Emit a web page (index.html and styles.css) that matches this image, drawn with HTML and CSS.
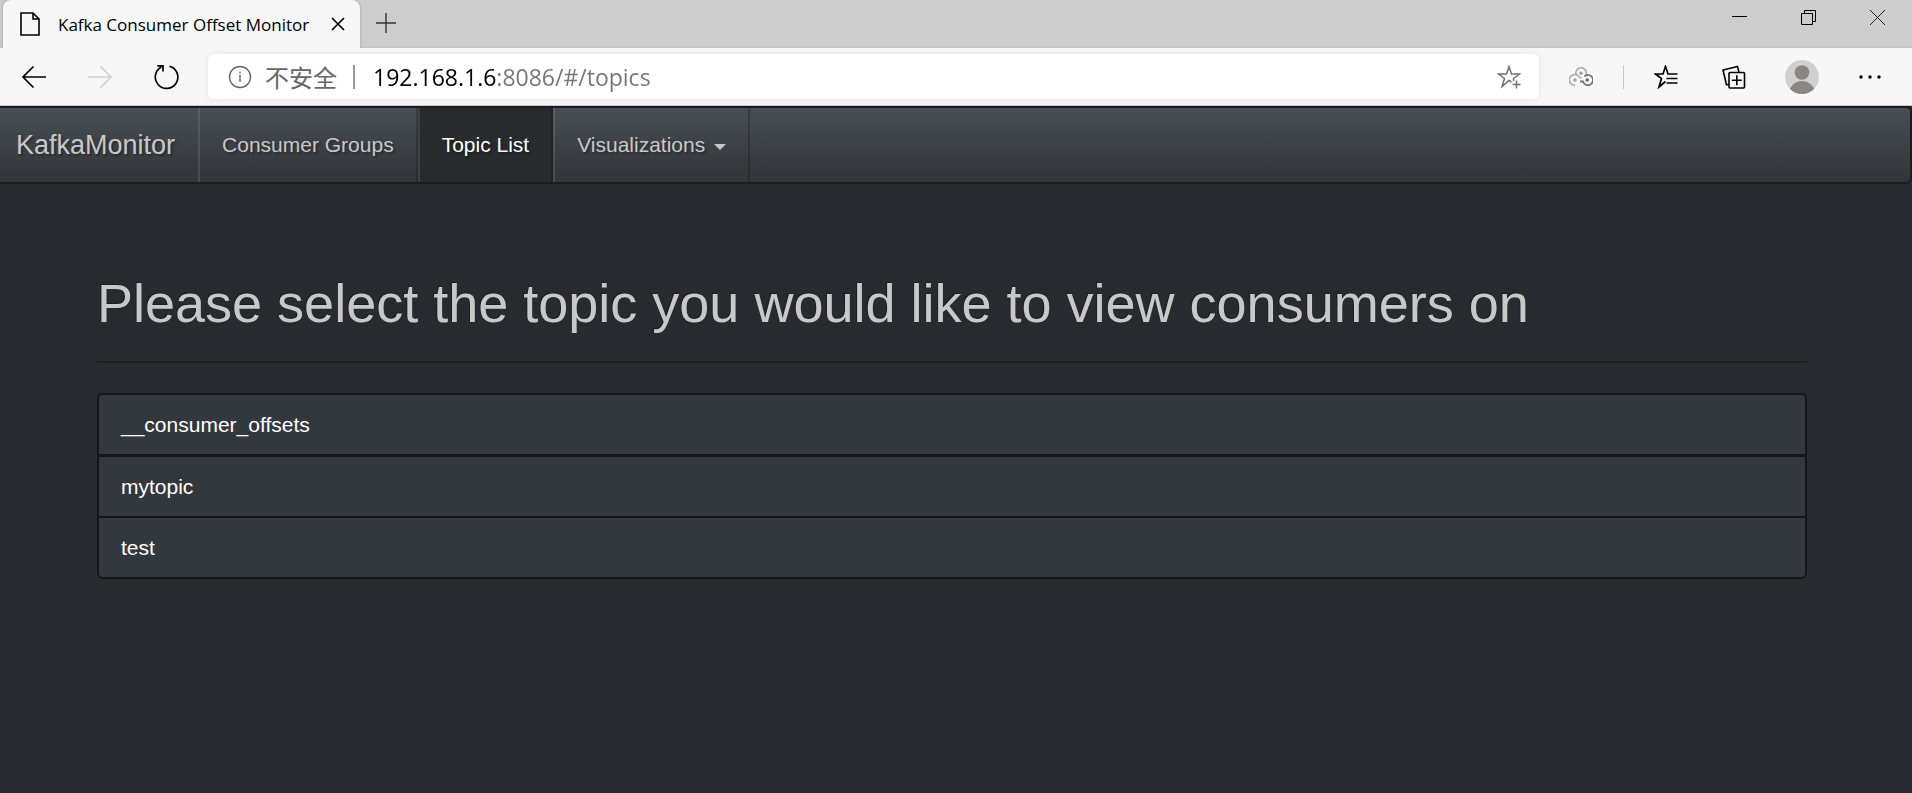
FILE: index.html
```html
<!DOCTYPE html>
<html lang="en">
<head>
<meta charset="utf-8">
<title>Kafka Consumer Offset Monitor</title>
<link rel="stylesheet" href="styles.css">
</head>
<body>
<div class="browser">
  <div class="tab-strip">
    <div class="tab">
      <svg class="tab-icon" width="20" height="24" viewBox="0 0 20 24" fill="none" stroke="#000" stroke-width="1.6"><path d="M1 1h12l6 6v16H1zM13 1v6h6"/></svg>
      <span class="tab-title">Kafka Consumer Offset Monitor</span>
      <button class="tab-close" type="button" aria-label="Close tab">
        <svg width="14" height="14" viewBox="0 0 14 14" stroke="#000" stroke-width="1.7"><path d="M1 1l12 12M13 1L1 13"/></svg>
      </button>
    </div>
    <button class="new-tab" type="button" aria-label="New tab">
      <svg width="20" height="20" viewBox="0 0 20 20" stroke="#333" stroke-width="1.4"><path d="M10 0v20M0 10h20"/></svg>
    </button>
    <div class="window-controls">
      <button type="button" aria-label="Minimize"><svg width="15" height="15" viewBox="0 0 15 15" stroke="#000"><path d="M0 6.5h15"/></svg></button>
      <button type="button" aria-label="Restore"><svg width="15" height="15" viewBox="0 0 15 15" fill="none" stroke="#000"><path d="M.5 3.5h11v11H.5zM3.500 3.500v-3h11v11h-3"/></svg></button>
      <button type="button" aria-label="Close"><svg width="15" height="15" viewBox="0 0 15 15" stroke="#222"><path d="M0 0l15 15M15 0L0 15"/></svg></button>
    </div>
  </div>
  <div class="toolbar">
    <button class="tool" type="button" aria-label="Back"><svg width="24" height="22" viewBox="0 0 24 22" fill="none" stroke="#000" stroke-width="1.6"><path d="M24 11H1M11.500 .5L1 11l10.500 10.500"/></svg></button>
    <button class="tool" type="button" aria-label="Forward" disabled><svg width="24" height="22" viewBox="0 0 24 22" fill="none" stroke="#cfcfcf" stroke-width="1.6"><path d="M0 11h23M12.500 .5L23 11 12.500 21.500"/></svg></button>
    <button class="tool" type="button" aria-label="Refresh"><svg width="26" height="26" viewBox="0 0 26 26" fill="none" stroke="#000" stroke-width="1.700"><path d="M16.500 2.200A11.300 11.300 0 1 1 8.500 3M4.300 1.800h5.700v5.700"/></svg></button>
    <form class="address">
      <button class="site-info" type="button">
        <svg width="24" height="24" viewBox="0 0 24 24" fill="none" stroke="#666" stroke-width="1.400"><circle cx="12" cy="12" r="10.500"/><path d="M12 10v7M12 6.500v1.800"/></svg>
        <span lang="zh">不安全</span>
      </button>
      <input class="url" type="text" aria-label="Address" value="192.168.1.6:8086/#/topics">
      <button class="add-favorite" type="button" aria-label="Add to favorites"><svg width="24" height="24" viewBox="0 0 24 24" fill="none" stroke="#707070" stroke-width="1.500"><path d="M14.500 17L12 15.500 5 21.500 7.500 13.500 1.500 9H9.500L12 1.500 14.500 9H22.500L16.500 13.500V16M19.500 15.500v8M15.500 19.500h8"/></svg></button>
    </form>
    <button class="tool wide" type="button" aria-label="Extension">
      <svg width="24" height="20" viewBox="0 0 24 20" fill="none" stroke-width="1.800"><path stroke="#b0b0b0" d="M6 18.300A5.400 5.400 0 1 1 9.500 9M7.500 8.500A5.200 5.200 0 1 1 16 9.500M9.500 9.500a5 5 0 0 0 3 1.500"/><path stroke="#777" d="M15.500 9.300A5.100 5.100 0 1 1 14 14.500h-3"/><g fill="#a0a0a0"><circle cx="6" cy="13" r="1.700"/><circle cx="12" cy="6.200" r="1.700"/><circle cx="18.200" cy="13" r="1.700" fill="#666"/></g></svg>
    </button>
    <span class="tool-divider"></span>
    <button class="tool wide" type="button" aria-label="Favorites"><svg width="24" height="24" viewBox="0 0 24 24" fill="none" stroke="#000" stroke-width="1.700"><path d="M11.500 16.500L5 22l2.500-8.500L1.500 9H9l2.500-7.500L14 9h9.500M12.500 13.500h11M12.500 18h11"/></svg></button>
    <button class="tool wide" type="button" aria-label="Collections"><svg width="24" height="24" viewBox="0 0 24 24" fill="none" stroke="#000" stroke-width="1.600"><rect x="7" y="7.500" width="15.500" height="15.500" rx="1"/><path d="M14.800 10.200v10M9.800 15.200h10M7 19.300l-2.500.5L1 5 15.500 1.500 17 7.500"/></svg></button>
    <button class="tool wide" type="button" aria-label="Profile"><svg width="34" height="34" viewBox="0 0 34 34"><circle cx="17" cy="17" r="17" fill="#d2d0ce"/><circle cx="17" cy="12.500" r="7.300" fill="#8a8684"/><path d="M5 29c2-5 7-8 12-8s10 3 12 8a17 17 0 0 1-24 0z" fill="#8a8684"/></svg></button>
    <button class="tool wide" type="button" aria-label="Settings and more"><svg width="22" height="4" viewBox="0 0 22 4"><circle cx="2" cy="2" r="1.700"/><circle cx="11" cy="2" r="1.700"/><circle cx="20" cy="2" r="1.700"/></svg></button>
  </div>
</div>
<nav class="navbar">
  <a class="brand" href="#/">KafkaMonitor</a>
  <a class="nav-link" href="#/groups">Consumer Groups</a>
  <a class="nav-link active" href="#/topics">Topic List</a>
  <a class="nav-link dropdown" href="#/visualizations">Visualizations<span class="caret"></span></a>
</nav>
<main class="content">
  <h1>Please select the topic you would like to view consumers on</h1>
  <div class="topics">
    <a class="topic" href="#/topics/__consumer_offsets">__consumer_offsets</a>
    <a class="topic" href="#/topics/mytopic">mytopic</a>
    <a class="topic" href="#/topics/test">test</a>
  </div>
</main>
</body>
</html>
```
FILE: styles.css
```css
* {
  box-sizing: border-box;
}

body {
  margin: 0;
  background: #272b30;
  color: #c8c8c8;
  font: 21px/29px "Liberation Sans", Arial, sans-serif;
}

button {
  display: flex;
  align-items: center;
  justify-content: center;
  padding: 0;
  border: 0;
  background: none;
  color: inherit;
  font: inherit;
}

a {
  color: inherit;
  text-decoration: none;
}

/* Browser frame */

.browser {
  color: #000;
  font-family: "Open Sans", "Noto Sans CJK SC", sans-serif;
}

.tab-strip {
  display: flex;
  height: 48px;
  padding-left: 3px;
  background: linear-gradient(#cdcdcd 46px, #bebebe 48px);
}

.tab {
  display: flex;
  align-items: center;
  width: 357px;
  padding: 0 15px 0 17px;
  border-radius: 8px 8px 0 0;
  background: #f7f7f7;
  box-shadow: 0 0 3px #999;
  clip-path: inset(0 -4px);
}

.tab-title {
  flex: 1;
  margin-left: 18px;
  font-size: 17px;
  white-space: nowrap;
}

.new-tab {
  width: 52px;
  height: 46px;
}

.window-controls {
  display: flex;
  height: 35px;
  margin-left: auto;
}

.window-controls button {
  width: 69px;
}

.toolbar {
  display: flex;
  align-items: center;
  height: 58px;
  padding: 0 8px 0 1px;
  border-bottom: 1px solid #c4c8c8;
  background: #f7f7f7;
}

.tool {
  flex: none;
  width: 66px;
  height: 45px;
}

.tool.wide {
  width: 68px;
}

.address {
  display: flex;
  flex: 1;
  align-items: center;
  height: 45px;
  margin: 0 8px 0 9px;
  padding: 0 18px 0 20px;
  border-radius: 6px;
  background: #fff;
  box-shadow: 0 0 6px #e4e4e4;
}

.site-info {
  gap: 13px;
  padding-right: 16px;
  border-right: 2px solid #999;
  color: #666;
  font: 24px/24px "Noto Sans CJK SC", sans-serif;
}

/* The host is black and the rest of the URL grey */
.url {
  flex: 1;
  min-width: 0;
  margin-left: 18px;
  padding: 0;
  border: 0;
  outline: 0;
  background: linear-gradient(90deg, #000 123px, #757575 123px);
  background-clip: text;
  color: transparent;
  font: 23px/32px "Open Sans", sans-serif;
}

.tool-divider {
  width: 1px;
  height: 24px;
  margin: 0 8px;
  background: #c8c8c8;
}

/* Application navigation */

.navbar {
  display: flex;
  height: 78px;
  border: 2px solid #1a1c1e;
  border-left: 0;
  border-radius: 0 6px 6px 0;
  background: linear-gradient(#484e55, #3a3f44 60%, #313539);
  line-height: 74px;
  text-shadow: 2px 2px 2px rgba(0, 0, 0, 0.3);
}

.brand {
  padding: 0 23px 0 16px;
  font-size: 27px;
}

.nav-link {
  padding: 0 22px;
  border-right: 2px solid rgba(0, 0, 0, 0.2);
  border-left: 2px solid rgba(255, 255, 255, 0.1);
}

.nav-link.active {
  background: #272b2e;
  color: #fff;
}

.dropdown {
  display: flex;
  align-items: center;
  gap: 9px;
}

.caret {
  margin-top: 3px;
  border-top: 6px solid #c8c8c8;
  border-right: 6px solid transparent;
  border-left: 6px solid transparent;
}

/* Topic list */

.content {
  padding: 90px 105px 60px 97px;
}

h1 {
  margin: 0 0 30px;
  padding-bottom: 28px;
  border-bottom: 2px solid #1c1e22;
  font-size: 54px;
  font-weight: 400;
  line-height: 59px;
  text-shadow: -1px -1px 0 rgba(0, 0, 0, 0.3);
}

.topics {
  overflow: hidden;
  border: 2px solid #141619;
  border-radius: 6px;
}

.topic {
  display: block;
  padding: 15px 22px;
  border-bottom: 2px solid #141619;
  background: #32383e;
  color: #fff;
}

.topic:first-child {
  border-bottom-width: 3px;
}

.topic:last-child {
  border-bottom: 0;
}
```
